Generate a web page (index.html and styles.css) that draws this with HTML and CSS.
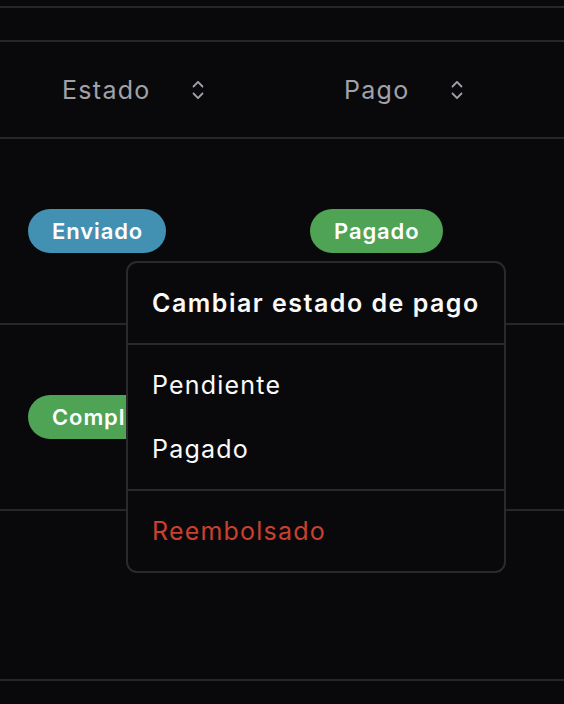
FILE: index.html
```html
<!DOCTYPE html>
<html lang="es">
<head>
<meta charset="utf-8">
<title>Pedidos</title>
<link rel="stylesheet" href="styles.css">
</head>
<body>
<div class="table">
  <div class="row row-top"></div>
  <div class="row row-bar"></div>
  <div class="row row-head">
    <div class="cell">
      <button class="sort"><span class="sort-text">Estado</span>
        <svg class="caret" viewBox="0 0 15 15" aria-hidden="true"><path d="M4.93179 5.43179C4.75605 5.60753 4.75605 5.89245 4.93179 6.06819C5.10753 6.24392 5.39245 6.24392 5.56819 6.06819L7.49999 4.13638L9.43179 6.06819C9.60753 6.24392 9.89245 6.24392 10.0682 6.06819C10.2439 5.89245 10.2439 5.60753 10.0682 5.43179L7.81819 3.18179C7.73379 3.0974 7.61933 3.04999 7.49999 3.04999C7.38064 3.04999 7.26618 3.0974 7.18179 3.18179L4.93179 5.43179ZM10.0682 9.56819C10.2439 9.39245 10.2439 9.10753 10.0682 8.93179C9.89245 8.75606 9.60753 8.75606 9.43179 8.93179L7.49999 10.8636L5.56819 8.93179C5.39245 8.75606 5.10753 8.75606 4.93179 8.93179C4.75605 9.10753 4.75605 9.39245 4.93179 9.56819L7.18179 11.8182C7.26618 11.9026 7.38064 11.95 7.49999 11.95C7.61933 11.95 7.73379 11.9026 7.81819 11.8182L10.0682 9.56819Z"/></svg>
      </button>
    </div>
    <div class="cell">
      <button class="sort"><span class="sort-text">Pago</span>
        <svg class="caret" viewBox="0 0 15 15" aria-hidden="true"><path d="M4.93179 5.43179C4.75605 5.60753 4.75605 5.89245 4.93179 6.06819C5.10753 6.24392 5.39245 6.24392 5.56819 6.06819L7.49999 4.13638L9.43179 6.06819C9.60753 6.24392 9.89245 6.24392 10.0682 6.06819C10.2439 5.89245 10.2439 5.60753 10.0682 5.43179L7.81819 3.18179C7.73379 3.0974 7.61933 3.04999 7.49999 3.04999C7.38064 3.04999 7.26618 3.0974 7.18179 3.18179L4.93179 5.43179ZM10.0682 9.56819C10.2439 9.39245 10.2439 9.10753 10.0682 8.93179C9.89245 8.75606 9.60753 8.75606 9.43179 8.93179L7.49999 10.8636L5.56819 8.93179C5.39245 8.75606 5.10753 8.75606 4.93179 8.93179C4.75605 9.10753 4.75605 9.39245 4.93179 9.56819L7.18179 11.8182C7.26618 11.9026 7.38064 11.95 7.49999 11.95C7.61933 11.95 7.73379 11.9026 7.81819 11.8182L10.0682 9.56819Z"/></svg>
      </button>
    </div>
  </div>
  <div class="row row-data">
    <div class="cell"><span class="badge badge-blue">Enviado</span></div>
    <div class="cell"><span class="badge badge-green">Pagado</span></div>
  </div>
  <div class="row row-data">
    <div class="cell"><span class="badge badge-green">Completado</span></div>
    <div class="cell"><span class="badge badge-green">Pagado</span></div>
  </div>
  <div class="row row-last"></div>
  <div class="row row-rest"></div>
</div>

<div class="menu" role="menu">
  <div class="menu-label">Cambiar estado de pago</div>
  <div class="menu-sep"></div>
  <div class="menu-item" role="menuitem">Pendiente</div>
  <div class="menu-item" role="menuitem">Pagado</div>
  <div class="menu-sep"></div>
  <div class="menu-item menu-danger" role="menuitem">Reembolsado</div>
</div>
</body>
</html>
```

FILE: styles.css
```css
html, body {
  margin: 0;
  padding: 0;
  background: #09090b;
  height: 100%;
  overflow: hidden;
}

body {
  font-family: Inter, "Noto Sans", sans-serif;
  color: #fafafa;
  position: relative;
}

.table {
  display: flex;
  flex-direction: column;
}

.row {
  display: flex;
  border-bottom: 2px solid #27272a;
}

.row-top { height: 6px; }
.row-bar { height: 32px; }
.row-head { height: 95px; }
.row-data { height: 184px; }
.row-last { height: 168px; }
.row-rest { height: 100px; border-bottom: none; }

.cell {
  width: 284px;
  padding-left: 28px;
  box-sizing: border-box;
  display: flex;
  align-items: center;
}

.sort {
  display: flex;
  align-items: center;
  gap: 32px;
  background: none;
  border: none;
  padding: 0 0 0 34px;
  font-family: inherit;
  font-size: 25px;
  letter-spacing: 1.3px;
  color: #a1a1aa;
  cursor: pointer;
}

.caret {
  width: 30px;
  height: 30px;
  fill: currentColor;
}

.badge {
  display: inline-flex;
  align-items: center;
  height: 44px;
  padding: 0 23px 0 24px;
  border-radius: 22px;
  font-size: 22px;
  font-weight: 600;
  letter-spacing: 0.9px;
  color: #ffffff;
  white-space: nowrap;
}

.badge-blue { background: #4391b2; }
.badge-green { background: #4ea354; }

.menu {
  position: absolute;
  left: 126px;
  top: 261px;
  width: 380px;
  box-sizing: border-box;
  padding: 8px;
  background: #09090b;
  border: 2px solid #2a2a2d;
  border-radius: 11px;
}

.menu-label,
.menu-item {
  height: 64px;
  display: flex;
  align-items: center;
  padding: 0 16px;
  font-size: 25px;
  letter-spacing: 1.2px;
}

.menu-label {
  font-weight: 600;
  letter-spacing: 1.5px;
}

.menu-item { color: #fafafa; }

.menu-danger { color: #c9402f; }

.menu-sep {
  height: 2px;
  margin: 8px -8px;
  background: #2a2a2d;
}
```
